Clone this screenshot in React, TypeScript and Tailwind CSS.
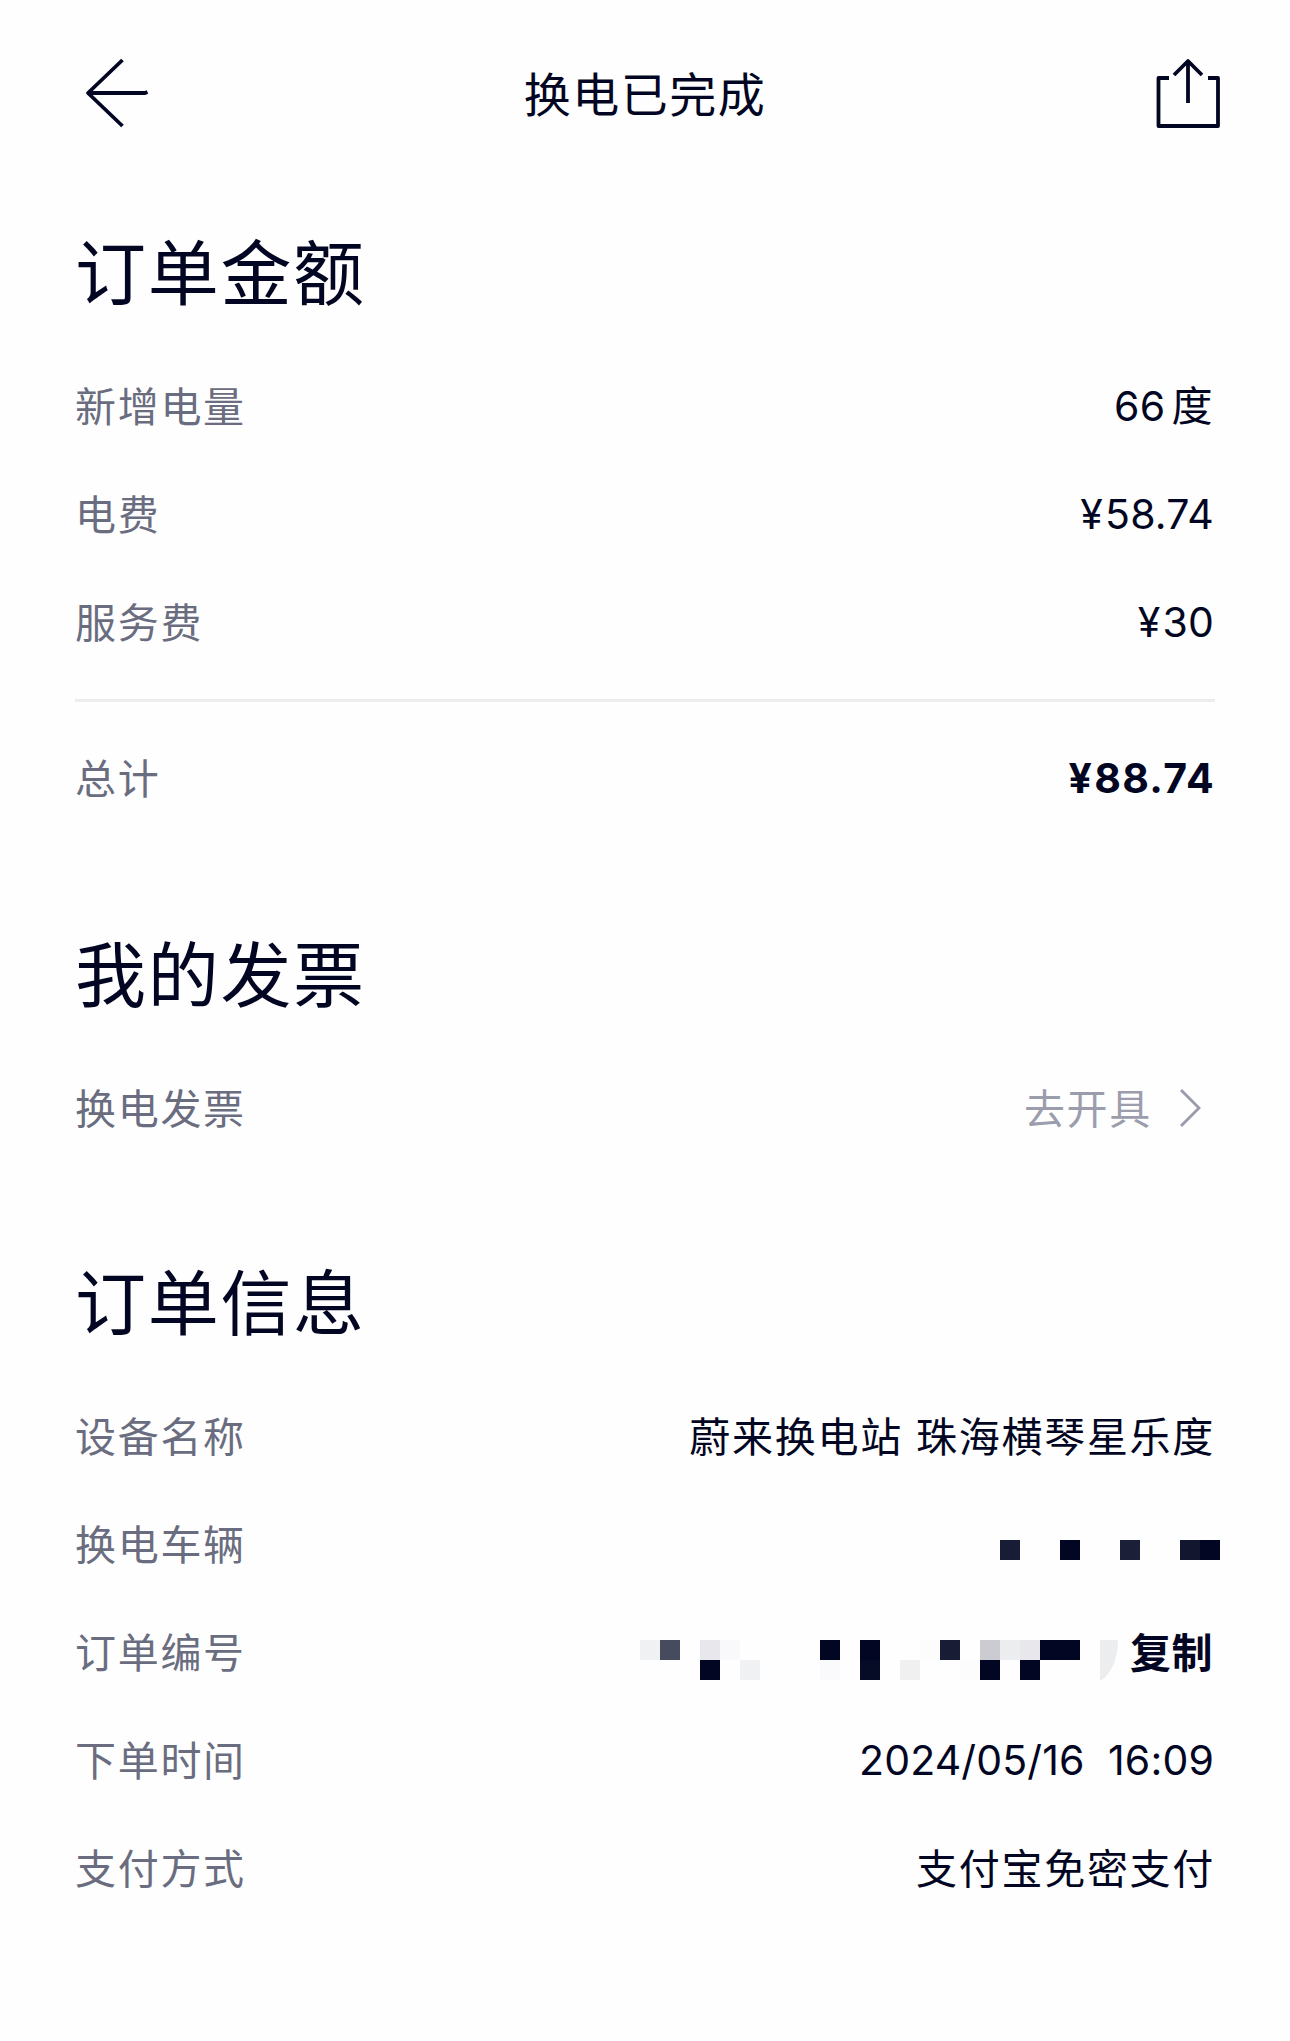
import type { ReactNode } from 'react';

type Cell = { col: number; row: number; color: string };

const plateCells: Cell[] = [
  { col: 1, row: 1, color: '#181c35' },
  { col: 4, row: 1, color: '#020622' },
  { col: 7, row: 1, color: '#1b1f38' },
  { col: 10, row: 1, color: '#12162f' },
  { col: 11, row: 1, color: '#020622' },
];

const orderCells: Cell[] = [
  { col: 1, row: 1, color: '#f0f1f2' },
  { col: 2, row: 1, color: '#474b5e' },
  { col: 4, row: 1, color: '#e8e7ec' },
  { col: 5, row: 1, color: '#f9f9fb' },
  { col: 10, row: 1, color: '#020622' },
  { col: 12, row: 1, color: '#020622' },
  { col: 15, row: 1, color: '#fcfcfd' },
  { col: 16, row: 1, color: '#181c35' },
  { col: 18, row: 1, color: '#cccbd2' },
  { col: 19, row: 1, color: '#ebedee' },
  { col: 20, row: 1, color: '#e8e7ec' },
  { col: 21, row: 1, color: '#020622' },
  { col: 22, row: 1, color: '#020622' },
  { col: 4, row: 2, color: '#020622' },
  { col: 6, row: 2, color: '#f0f1f2' },
  { col: 10, row: 2, color: '#fafafc' },
  { col: 12, row: 2, color: '#060b26' },
  { col: 14, row: 2, color: '#f0f0f0' },
  { col: 17, row: 2, color: '#fcfcfd' },
  { col: 18, row: 2, color: '#020622' },
  { col: 20, row: 2, color: '#020622' },
];

function Mosaic({ cells }: { cells: Cell[] }) {
  return (
    <div className="grid auto-cols-[20px] auto-rows-[20px]">
      {cells.map((cell) => (
        <span
          key={`${cell.col}-${cell.row}`}
          style={{ gridColumn: cell.col, gridRow: cell.row, backgroundColor: cell.color }}
        />
      ))}
    </div>
  );
}

function Row({ label, children }: { label: string; children: ReactNode }) {
  return (
    <div className="flex h-[108px] items-center justify-between">
      <span className="pt-[2px] tracking-[1.7px] text-[#6a6d80]">{label}</span>
      {children}
    </div>
  );
}

function Price({ amount }: { amount: string }) {
  return (
    <span className="mr-px tracking-[0.2px]">
      <span className="mr-[2px]">¥</span>
      {amount}
    </span>
  );
}

function Title({ children }: { children: ReactNode }) {
  return <h2 className="h-[80px] text-[71px] leading-[82px] tracking-[1.7px]">{children}</h2>;
}

export default function App() {
  return (
    <main className="h-[2041px] w-[1290px] bg-[#fefefe] px-[75px] font-['Inter','Noto_Sans_CJK_SC',sans-serif] text-[41px] leading-[60px] text-[#020622]">
      <header className="flex h-[188px] items-center justify-between">
        <svg className="-mt-[3px] ml-[9px] h-[72px] w-[66px]" viewBox="0 0 66 72" fill="none" stroke="currentColor" strokeWidth="3.8">
          <path d="M38.5 3 4 36 38.5 69M4 36H61L63.5 35" strokeLinejoin="round" />
        </svg>
        <h1 className="mr-[15px] pt-px text-[47px] tracking-[1.5px]">换电已完成</h1>
        <svg className="-mt-[2px] -mr-[6px] h-[72px] w-[66px]" viewBox="0 0 66 72" fill="none" stroke="currentColor" strokeWidth="3.8">
          <path d="M14 21H3.5V69H63V21H53M33 46V4M19 18 33 4 47 18" strokeLinejoin="round" />
        </svg>
      </header>

      <section className="pt-[44px]">
        <Title>订单金额</Title>
        <div className="mt-[40px]">
          <Row label="新增电量">
            <span className="mr-[2px] tracking-[0.4px]">66<span className="ml-[6px]">度</span></span>
          </Row>
          <Row label="电费">
            <Price amount="58.74" />
          </Row>
          <Row label="服务费">
            <Price amount="30" />
          </Row>
        </div>
        <div className="mt-[23px] h-[3px] bg-[#ebedee]" />
        <div className="mt-[22px]">
          <Row label="总计">
            <strong className="font-bold tracking-[1.3px]">
              <span className="mr-px">¥</span>88.74
            </strong>
          </Row>
        </div>
      </section>

      <section className="pt-[102px]">
        <Title>我的发票</Title>
        <div className="mt-[40px]">
          <Row label="换电发票">
            <span className="flex items-center text-[#9b9dad]">
              <span className="pt-px tracking-[1.7px]">去开具</span>
              <svg className="mr-[14px] ml-[27px] h-[40px] w-[22px]" viewBox="0 0 22 40" fill="none" stroke="currentColor" strokeWidth="3">
                <path d="M2 2 20 20 2 38" />
              </svg>
            </span>
          </Row>
        </div>
      </section>

      <section className="pt-[100px]">
        <Title>订单信息</Title>
        <div className="mt-[40px]">
          <Row label="设备名称">
            <span className="pt-[2px] tracking-[1.7px]">蔚来换电站 珠海横琴星乐度</span>
          </Row>
          <Row label="换电车辆">
            <div className="-mr-[5px] pt-[12px]">
              <Mosaic cells={plateCells} />
            </div>
          </Row>
          <Row label="订单编号">
            <div className="flex items-center">
              <div className="pt-[16px]">
                <Mosaic cells={orderCells} />
              </div>
              <svg className="mt-[16px] mr-[12px] ml-[20px] h-[40px] w-[18px]" viewBox="0 0 18 40">
                <path d="M0 0H18C18 16 13 31 2 40H0Z" fill="#ebedee" />
              </svg>
              <button className="mr-[2px] pt-[2px] font-bold tracking-[0.5px]">复制</button>
            </div>
          </Row>
          <Row label="下单时间">
            <span className="mr-px whitespace-pre tracking-[0.15px]">2024/05/16  16:09</span>
          </Row>
          <Row label="支付方式">
            <span className="pt-[2px] tracking-[1.7px]">支付宝免密支付</span>
          </Row>
        </div>
      </section>
    </main>
  );
}
